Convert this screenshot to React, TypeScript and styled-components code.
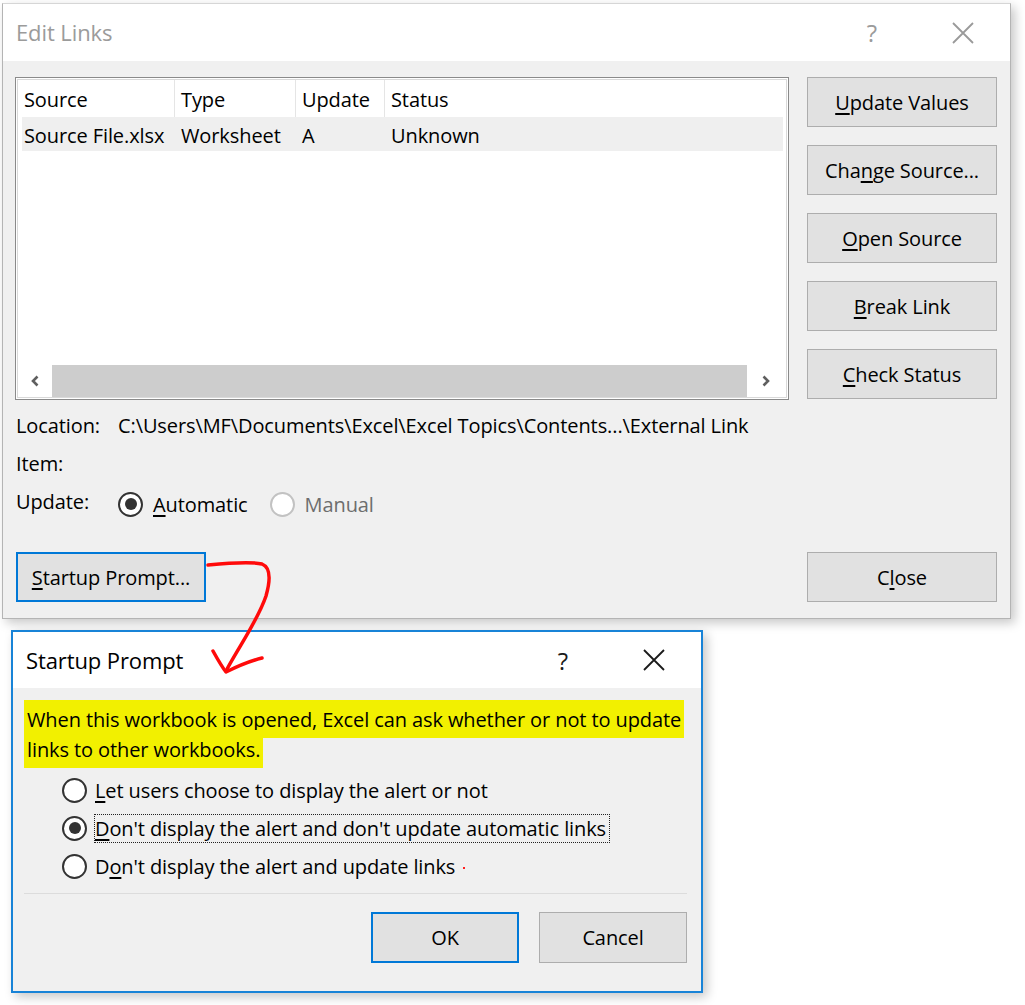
import React from 'react';
import styled, { createGlobalStyle } from 'styled-components';

const GlobalStyle = createGlobalStyle`
  html, body {
    margin: 0;
    padding: 0;
    background: #ffffff;
  }
  body {
    font-family: 'Segoe UI', 'Open Sans', 'Noto Sans', sans-serif;
    color: #000;
  }
`;

const columns = [
  { label: 'Source', width: 157 },
  { label: 'Type', width: 121 },
  { label: 'Update', width: 89 },
  { label: 'Status', width: 0 },
];

const row = ['Source File.xlsx', 'Worksheet', 'A', 'Unknown'];

export default function App() {
  return (
    <Page>
      <GlobalStyle />
      <EditDialog>
        <TitleBar>
          <Title $muted>Edit Links</Title>
          <TitleActions>
            <Help $muted>?</Help>
            <CloseIcon $color="#9a9a9a" />
          </TitleActions>
        </TitleBar>
        <EditBody>
          <MainGrid>
            <ListBox>
              <ListInner>
                <HeaderRow>
                  {columns.map((c) => (
                    <HeaderCell key={c.label} $width={c.width}>
                      {c.label}
                    </HeaderCell>
                  ))}
                </HeaderRow>
                <DataRow>
                  {row.map((v, i) => (
                    <DataCell key={v} $width={columns[i].width}>
                      {v}
                    </DataCell>
                  ))}
                </DataRow>
                <ListSpacer />
                <ScrollBar>
                  <ScrollArrow $width={34}>
                    <Chevron dir="left" />
                  </ScrollArrow>
                  <ScrollThumb />
                  <ScrollArrow $width={38}>
                    <Chevron dir="right" />
                  </ScrollArrow>
                </ScrollBar>
              </ListInner>
            </ListBox>
            <SideButtons>
              <DialogButton><u>U</u>pdate Values</DialogButton>
              <DialogButton>Cha<u>n</u>ge Source...</DialogButton>
              <DialogButton><u>O</u>pen Source</DialogButton>
              <DialogButton><u>B</u>reak Link</DialogButton>
              <DialogButton><u>C</u>heck Status</DialogButton>
            </SideButtons>
          </MainGrid>

          <InfoList>
            <InfoRow>
              <InfoLabel>Location:</InfoLabel>
              <span>C:\Users\MF\Documents\Excel\Excel Topics\Contents...\External Link</span>
            </InfoRow>
            <InfoRow>
              <InfoLabel>Item:</InfoLabel>
            </InfoRow>
            <InfoRow>
              <InfoLabel>Update:</InfoLabel>
              <RadioOption>
                <Radio $checked />
                <span><u>A</u>utomatic</span>
              </RadioOption>
              <RadioOption $disabled>
                <Radio $disabled />
                <span>Manual</span>
              </RadioOption>
            </InfoRow>
          </InfoList>

          <FooterRow>
            <DialogButton $focused $width={190}><u>S</u>tartup Prompt...</DialogButton>
            <DialogButton>C<u>l</u>ose</DialogButton>
          </FooterRow>
        </EditBody>
      </EditDialog>

      <PromptDialog>
        <PromptTitleBar>
          <Title>Startup Prompt</Title>
          <PromptActions>
            <Help>?</Help>
            <CloseIcon $color="#1a1a1a" />
          </PromptActions>
        </PromptTitleBar>
        <PromptBody>
          <Message>
            <Highlight>
              When this workbook is opened, Excel can ask whether or not to update links to other workbooks.
            </Highlight>
          </Message>
          <Options>
            <PromptOption>
              <Radio />
              <OptionText><u>L</u>et users choose to display the alert or not</OptionText>
            </PromptOption>
            <PromptOption>
              <Radio $checked />
              <OptionText $focused><u>D</u>on't display the alert and don't update automatic links</OptionText>
            </PromptOption>
            <PromptOption>
              <Radio />
              <OptionText>
                D<u>o</u>n't display the alert and update links <RedDot />
              </OptionText>
            </PromptOption>
          </Options>
          <Separator />
          <PromptFooter>
            <DialogButton $focused $width={148} $height={51}>OK</DialogButton>
            <DialogButton $width={148} $height={51}>Cancel</DialogButton>
          </PromptFooter>
        </PromptBody>
      </PromptDialog>

      <Annotation width="80" height="120" viewBox="200 558 80 120">
        <path
          d="M208 565 C 228 563, 250 561, 262 564 C 272 568, 270 582, 266 596 C 258 620, 240 645, 226 671"
          fill="none"
          stroke="#ff0a0a"
          strokeWidth="3.5"
          strokeLinecap="round"
        />
        <path
          d="M213 651 C 218 660, 222 667, 226 672 C 238 666, 250 661, 262 658"
          fill="none"
          stroke="#ff0a0a"
          strokeWidth="3.5"
          strokeLinecap="round"
          strokeLinejoin="round"
        />
      </Annotation>
    </Page>
  );
}

const CloseIcon: React.FC<{ $color: string }> = ({ $color }) => (
  <svg width="22" height="22" viewBox="0 0 22 22">
    <path d="M1 1 L21 21 M21 1 L1 21" stroke={$color} strokeWidth="1.8" fill="none" />
  </svg>
);

const Chevron: React.FC<{ dir: 'left' | 'right' }> = ({ dir }) => (
  <svg width="12" height="14" viewBox="0 0 12 14">
    <path
      d={dir === 'left' ? 'M8.5 2.5 L4 7 L8.5 11.5' : 'M3.5 2.5 L8 7 L3.5 11.5'}
      stroke="#5f5f5f"
      strokeWidth="2.6"
      fill="none"
    />
  </svg>
);

/* ─── STYLED COMPONENTS ─── */
const Page = styled.div`
  position: relative;
  width: 1025px;
  height: 1005px;
  padding: 3px 0 0 2px;
  box-sizing: border-box;
  font-size: 20px;
  letter-spacing: -0.1px;

  u {
    text-decoration: underline;
    text-underline-offset: 3px;
    text-decoration-thickness: 2px;
  }
`;

const EditDialog = styled.div`
  width: 1009px;
  height: 616px;
  box-sizing: border-box;
  border: 1px solid #b4b4b4;
  border-top-color: #d6d6d6;
  background: #f0f0f0;
  box-shadow: 4px 4px 10px rgba(0, 0, 0, 0.22);
  display: flex;
  flex-direction: column;
`;

const TitleBar = styled.div`
  height: 57px;
  flex: none;
  background: #fff;
  display: flex;
  align-items: center;
  justify-content: space-between;
  padding: 0 36px 0 13px;
`;

const Title = styled.div<{ $muted?: boolean }>`
  font-size: 22px;
  color: ${(p) => (p.$muted ? '#9b9b9b' : '#000')};
  padding-bottom: ${(p) => (p.$muted ? '2px' : '0')};
`;

const TitleActions = styled.div`
  display: flex;
  align-items: center;
  gap: 75px;
`;

const Help = styled.div<{ $muted?: boolean }>`
  font-size: 24px;
  color: ${(p) => (p.$muted ? '#9b9b9b' : '#1a1a1a')};
`;

const EditBody = styled.div`
  flex: 1;
  padding: 16px 13px 16px 12px;
  display: flex;
  flex-direction: column;
`;

const MainGrid = styled.div`
  display: grid;
  grid-template-columns: 774px 190px;
  column-gap: 18px;
`;

const ListBox = styled.div`
  height: 323px;
  box-sizing: border-box;
  border: 1px solid #8a8a8a;
  padding: 1px;
  background: #fff;
`;

const ListInner = styled.div`
  height: 100%;
  box-sizing: border-box;
  border: 1px solid #d9d9d9;
  display: flex;
  flex-direction: column;
`;

const HeaderRow = styled.div`
  display: flex;
  height: 37px;
  flex: none;
`;

const HeaderCell = styled.div<{ $width: number }>`
  ${(p) => (p.$width ? `width: ${p.$width}px;` : 'flex: 1;')}
  box-sizing: border-box;
  padding: 2px 0 0 6px;
  display: flex;
  align-items: center;
  border-right: ${(p) => (p.$width ? '1px solid #e5e5e5' : 'none')};
`;

const DataRow = styled.div`
  display: flex;
  height: 34px;
  flex: none;
  background: #efefef;
  margin: 0 3px 0 4px;
`;

const DataCell = styled.div<{ $width: number }>`
  ${(p) => (p.$width ? `width: ${p.$width - (p.$width === 157 ? 4 : 0)}px;` : 'flex: 1;')}
  box-sizing: border-box;
  padding: 2px 0 0 ${(p) => (p.$width === 157 ? '2px' : '6px')};
  display: flex;
  align-items: center;
`;

const ListSpacer = styled.div`
  flex: 1;
`;

const ScrollBar = styled.div`
  height: 32px;
  flex: none;
  display: flex;
  margin: 0 1px 0 0;
`;

const ScrollArrow = styled.div<{ $width: number }>`
  width: ${(p) => p.$width}px;
  flex: none;
  display: flex;
  align-items: center;
  justify-content: center;
  background: #fff;
`;

const ScrollThumb = styled.div`
  flex: 1;
  background: #cdcdcd;
`;

const SideButtons = styled.div`
  display: flex;
  flex-direction: column;
  gap: 18px;
`;

const DialogButton = styled.button<{ $focused?: boolean; $width?: number; $height?: number }>`
  width: ${(p) => (p.$width ? `${p.$width}px` : '190px')};
  height: ${(p) => (p.$height ? `${p.$height}px` : '50px')};
  flex: none;
  box-sizing: border-box;
  background: #e1e1e1;
  border: ${(p) => (p.$focused ? '2px solid #0078d7' : '1px solid #adadad')};
  font: inherit;
  font-size: 20px;
  letter-spacing: -0.1px;
  color: #000;
  padding: 0;
  cursor: default;
`;

const InfoList = styled.div`
  display: flex;
  flex-direction: column;
  margin-top: 11px;
  gap: 10px;
`;

const InfoRow = styled.div`
  display: flex;
  align-items: center;
  height: 28px;
  padding-left: 1px;
`;

const InfoLabel = styled.span`
  width: 102px;
  flex: none;
`;

const RadioOption = styled.label<{ $disabled?: boolean }>`
  display: flex;
  align-items: center;
  gap: 10px;
  margin-top: 6px;
  margin-right: 22px;
  color: ${(p) => (p.$disabled ? '#6d6d6d' : '#000')};
`;

const Radio = styled.span<{ $checked?: boolean; $disabled?: boolean }>`
  width: 25px;
  height: 25px;
  box-sizing: border-box;
  border-radius: 50%;
  border: 2px solid ${(p) => (p.$disabled ? '#c2c2c2' : '#333')};
  background: #fff;
  flex: none;
  display: flex;
  align-items: center;
  justify-content: center;

  &::after {
    content: '';
    display: ${(p) => (p.$checked ? 'block' : 'none')};
    width: 12px;
    height: 12px;
    border-radius: 50%;
    background: #333;
  }
`;

const FooterRow = styled.div`
  margin-top: auto;
  display: flex;
  justify-content: space-between;
  padding-left: 1px;
`;

const PromptDialog = styled.div`
  width: 692px;
  height: 363px;
  margin: 11px 0 0 9px;
  box-sizing: border-box;
  border: 2px solid #1883d7;
  background: #f0f0f0;
  box-shadow: 4px 4px 10px rgba(0, 0, 0, 0.22);
  display: flex;
  flex-direction: column;
`;

const PromptTitleBar = styled.div`
  height: 56px;
  flex: none;
  background: #fff;
  display: flex;
  align-items: center;
  justify-content: space-between;
  padding: 0 36px 0 13px;
`;

const PromptActions = styled.div`
  display: flex;
  align-items: center;
  gap: 75px;
`;

const PromptBody = styled.div`
  flex: 1;
  padding: 17px 14px 28px 11px;
  display: flex;
  flex-direction: column;
`;

const Message = styled.p`
  margin: 0;
  line-height: 30px;
  max-width: 665px;
`;

const Highlight = styled.span`
  background: #f2f000;
  padding: 6px 3px 5px 3px;
  box-decoration-break: clone;
  -webkit-box-decoration-break: clone;
`;

const Options = styled.div`
  display: flex;
  flex-direction: column;
  gap: 10px;
  padding-left: 38px;
  margin-top: 11px;
`;

const PromptOption = styled.div`
  display: flex;
  align-items: center;
  gap: 8px;
  height: 28px;
`;

const OptionText = styled.span<{ $focused?: boolean }>`
  outline: ${(p) => (p.$focused ? '1px dotted #222' : 'none')};
  outline-offset: 0;
  padding-right: 3px;
  line-height: 27px;
`;

const RedDot = styled.span`
  display: inline-block;
  width: 2px;
  height: 2px;
  background: #ff2020;
  margin-left: 3px;
  vertical-align: middle;
`;

const Separator = styled.div`
  height: 1px;
  background: #dcdcdc;
  margin: 13px 0 0 0;
`;

const PromptFooter = styled.div`
  margin-top: auto;
  display: flex;
  justify-content: flex-end;
  gap: 20px;
`;

const Annotation = styled.svg`
  position: absolute;
  left: 200px;
  top: 558px;
  pointer-events: none;
`;
